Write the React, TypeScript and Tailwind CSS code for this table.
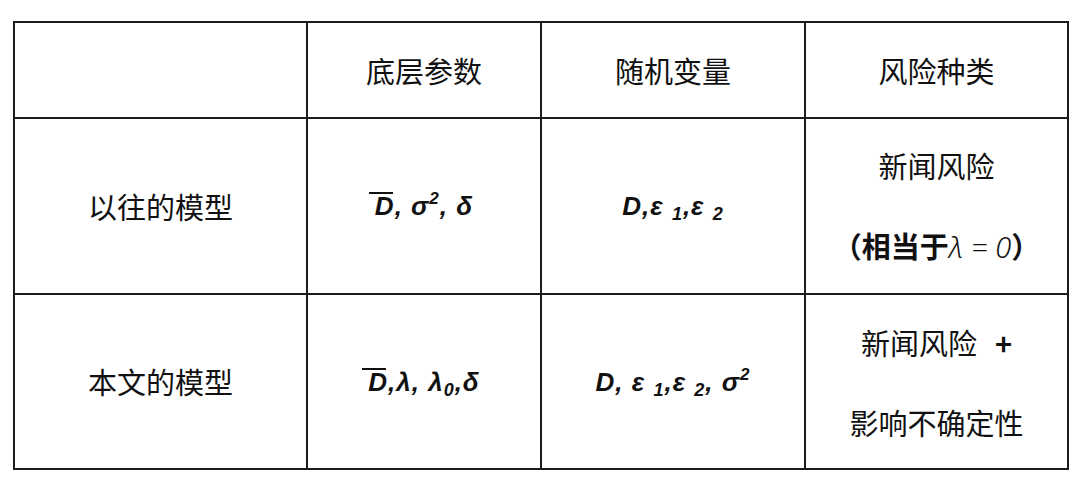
const cjk = "font-['Noto_Sans_CJK_SC','Noto_Sans',sans-serif]";
const math = "font-['Liberation_Sans','DejaVu_Sans',sans-serif] font-bold italic text-[26px] tracking-[1px]";

function Cell({ children, className = "" }: { children?: React.ReactNode; className?: string }) {
  return (
    <div className={`bg-white flex flex-col items-center justify-center text-center text-[#111] ${className}`}>
      {children}
    </div>
  );
}

function Bar({ children }: { children: React.ReactNode }) {
  return (
    <span className="relative inline-block">
      <span className="absolute -left-[6px] right-[2px] -top-[1px] h-[2px] bg-[#111]" />
      {children}
    </span>
  );
}

function Sub({ children }: { children: React.ReactNode }) {
  return <span className="text-[18px] relative top-[5px]">{children}</span>;
}

function Sup({ children }: { children: React.ReactNode }) {
  return <span className="text-[17px] relative -top-[11px]">{children}</span>;
}

export default function App() {
  return (
    <div className="w-[1080px] h-[489px] bg-white pt-[21px] pl-[13px]">
      <div
        className={`grid grid-cols-[291px_232px_262px_261px] grid-rows-[94px_174px_173px] gap-[2px] p-[2px] bg-[#1c1c1c] w-fit ${cjk} text-[29px] leading-none`}
      >
        <Cell />
        <Cell>底层参数</Cell>
        <Cell>随机变量</Cell>
        <Cell>风险种类</Cell>

        <Cell>以往的模型</Cell>
        <Cell className={math}>
          <span>
            <Bar>D</Bar>, σ<Sup>2</Sup>, δ
          </span>
        </Cell>
        <Cell className={math}>
          <span>
            D,ε <Sub>1</Sub>,ε <Sub>2</Sub>
          </span>
        </Cell>
        <Cell className="leading-[80px]">
          <div>新闻风险</div>
          <div>
            <span className="font-bold">（相当于</span>
            <span className="font-['Noto_Sans','DejaVu_Sans',sans-serif] italic font-light">λ = 0</span>
            <span className="font-bold">）</span>
          </div>
        </Cell>

        <Cell>本文的模型</Cell>
        <Cell className={math}>
          <span>
            <Bar>D</Bar>,λ, λ<Sub>0</Sub>,δ
          </span>
        </Cell>
        <Cell className={math}>
          <span>
            D, ε <Sub>1</Sub>,ε <Sub>2</Sub>, σ<Sup>2</Sup>
          </span>
        </Cell>
        <Cell className="leading-[80px]">
          <div>
            新闻风险<span className="font-bold ml-[18px]">+</span>
          </div>
          <div>影响不确定性</div>
        </Cell>
      </div>
    </div>
  );
}
